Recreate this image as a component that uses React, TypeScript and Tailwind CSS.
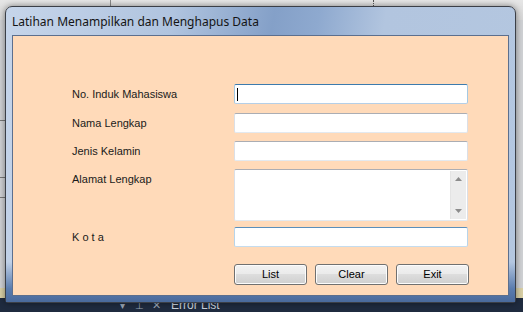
import React from "react";

const labelCls = "w-[221px] shrink-0 pl-[59px] text-[11px] leading-[13px] text-[#1a1a1a] whitespace-nowrap";
const inputCls =
  "w-[234px] h-[20px] bg-white border border-t-[#abadb3] border-x-[#dbdfe6] border-b-[#e3e9ef] rounded-[2px]";

function Btn({ label, w }: { label: string; w: string }) {
  return (
    <button
      className={`${w} h-[21px] rounded-[3px] border border-[#707070] bg-[linear-gradient(#f2f2f2_0%,#ebebeb_45%,#dddddd_50%,#cfcfcf_100%)] text-[11px] text-black shadow-[inset_0_0_0_1px_#fcfcfc]`}
    >
      {label}
    </button>
  );
}

export default function App() {
  return (
    <div
      className="relative w-[523px] h-[312px] overflow-hidden bg-[#cfd1d4]"
      style={{ fontFamily: '"Liberation Sans", Arial, sans-serif' }}
    >
      {/* backdrop bits */}
      <div className="absolute left-0 top-0 w-full h-[20px] bg-[linear-gradient(#e6e6e6,#d6d6d6)]" />
      <div className="absolute left-[110px] top-0 w-px h-[8px] bg-[#8a8a8a]" />
      <div className="absolute left-[373px] top-0 w-px h-[8px] border-l border-dotted border-[#555]" />
      <div className="absolute left-0 top-[120px] w-[5px] h-px bg-[#777]" />
      <div className="absolute left-0 top-[177px] w-[5px] h-px bg-[#777]" />
      <div className="absolute left-0 top-[197px] w-[5px] h-px bg-[#777]" />
      <div className="absolute left-0 top-[288px] w-full h-[10px] bg-[#d8cfa5]" />
      <div className="absolute left-0 top-[298px] w-full h-[14px] bg-[#1f2b3f] flex items-center text-[12px] text-[#c9d1dc]">
        <span className="ml-[120px] text-[10px] text-[#9aa5b5]">▾</span>
        <span className="ml-[10px] text-[10px] text-[#9aa5b5]">⊥</span>
        <span className="ml-[8px] text-[11px] text-[#9aa5b5]">✕</span>
        <span className="ml-[10px]">Error List</span>
      </div>

      {/* window */}
      <div className="absolute left-[5px] top-[6px] w-[511px] h-[297px] flex flex-col rounded-t-[7px] rounded-b-[3px] border border-[#3b3f47] bg-[linear-gradient(100deg,#c6d5ea_0%,#b0c4df_30%,#84a0c8_48%,#8ea9cf_56%,#b2c5df_68%,#b4c7e0_100%)] shadow-[0_0_6px_rgba(0,0,0,0.45)]">
        <div className="h-[28px] shrink-0 flex items-center pl-[6px] pt-[1px]">
          <span
            className="text-[12px] text-[#141414]"
            style={{ fontFamily: '"Noto Sans", "Open Sans", sans-serif' }}
          >
            Latihan Menampilkan dan Menghapus Data
          </span>
        </div>
        <div className="flex-1 flex px-[6px] pb-[6px] bg-[linear-gradient(transparent_85%,#5a7cae_95%,#4a6a9c_100%)]">
          <div className="flex-1 border border-[#5c6f8e] bg-[#ffdab9] flex flex-col">
            {/* row 1 */}
            <div className="flex items-center mt-[48px]">
              <span className={labelCls}>No. Induk Mahasiswa</span>
              <div className="w-[234px] h-[20px] bg-white border border-t-[#3d7bad] border-x-[#a4c9e3] border-b-[#b5cfe7] rounded-[2px] flex items-center pl-[2px]">
                <div className="w-px h-[13px] bg-black" />
              </div>
            </div>
            {/* row 2 */}
            <div className="flex items-center mt-[9px]">
              <span className={labelCls}>Nama Lengkap</span>
              <div className={inputCls} />
            </div>
            {/* row 3 */}
            <div className="flex items-center mt-[8px]">
              <span className={labelCls}>Jenis Kelamin</span>
              <div className={inputCls} />
            </div>
            {/* row 4 */}
            <div className="flex items-start mt-[8px]">
              <span className={`${labelCls} mt-[4px]`}>Alamat Lengkap</span>
              <div className="w-[234px] h-[52px] bg-white border border-t-[#abadb3] border-x-[#dbdfe6] border-b-[#e3e9ef] rounded-[2px] flex justify-end p-px">
                <div className="w-[16px] h-full bg-[#ececec] border-l border-[#e4e4e4] flex flex-col items-center justify-between py-[6px]">
                  <svg width="7" height="4" viewBox="0 0 7 4">
                    <path d="M0 4 L3.5 0 L7 4 Z" fill="#8c8c8c" />
                  </svg>
                  <svg width="7" height="4" viewBox="0 0 7 4">
                    <path d="M0 0 L3.5 4 L7 0 Z" fill="#8c8c8c" />
                  </svg>
                </div>
              </div>
            </div>
            {/* row 5 */}
            <div className="flex items-center mt-[6px]">
              <span className={labelCls}>K o t a</span>
              <div className="w-[234px] h-[20px] bg-white border border-t-[#5a8fbc] border-x-[#b7d4ea] border-b-[#c5dcee] rounded-[2px]" />
            </div>
            {/* buttons */}
            <div className="flex mt-[17px] pl-[221px] gap-[8px]">
              <Btn label="List" w="w-[73px]" />
              <Btn label="Clear" w="w-[73px]" />
              <Btn label="Exit" w="w-[73px]" />
            </div>
          </div>
        </div>
      </div>
    </div>
  );
}
